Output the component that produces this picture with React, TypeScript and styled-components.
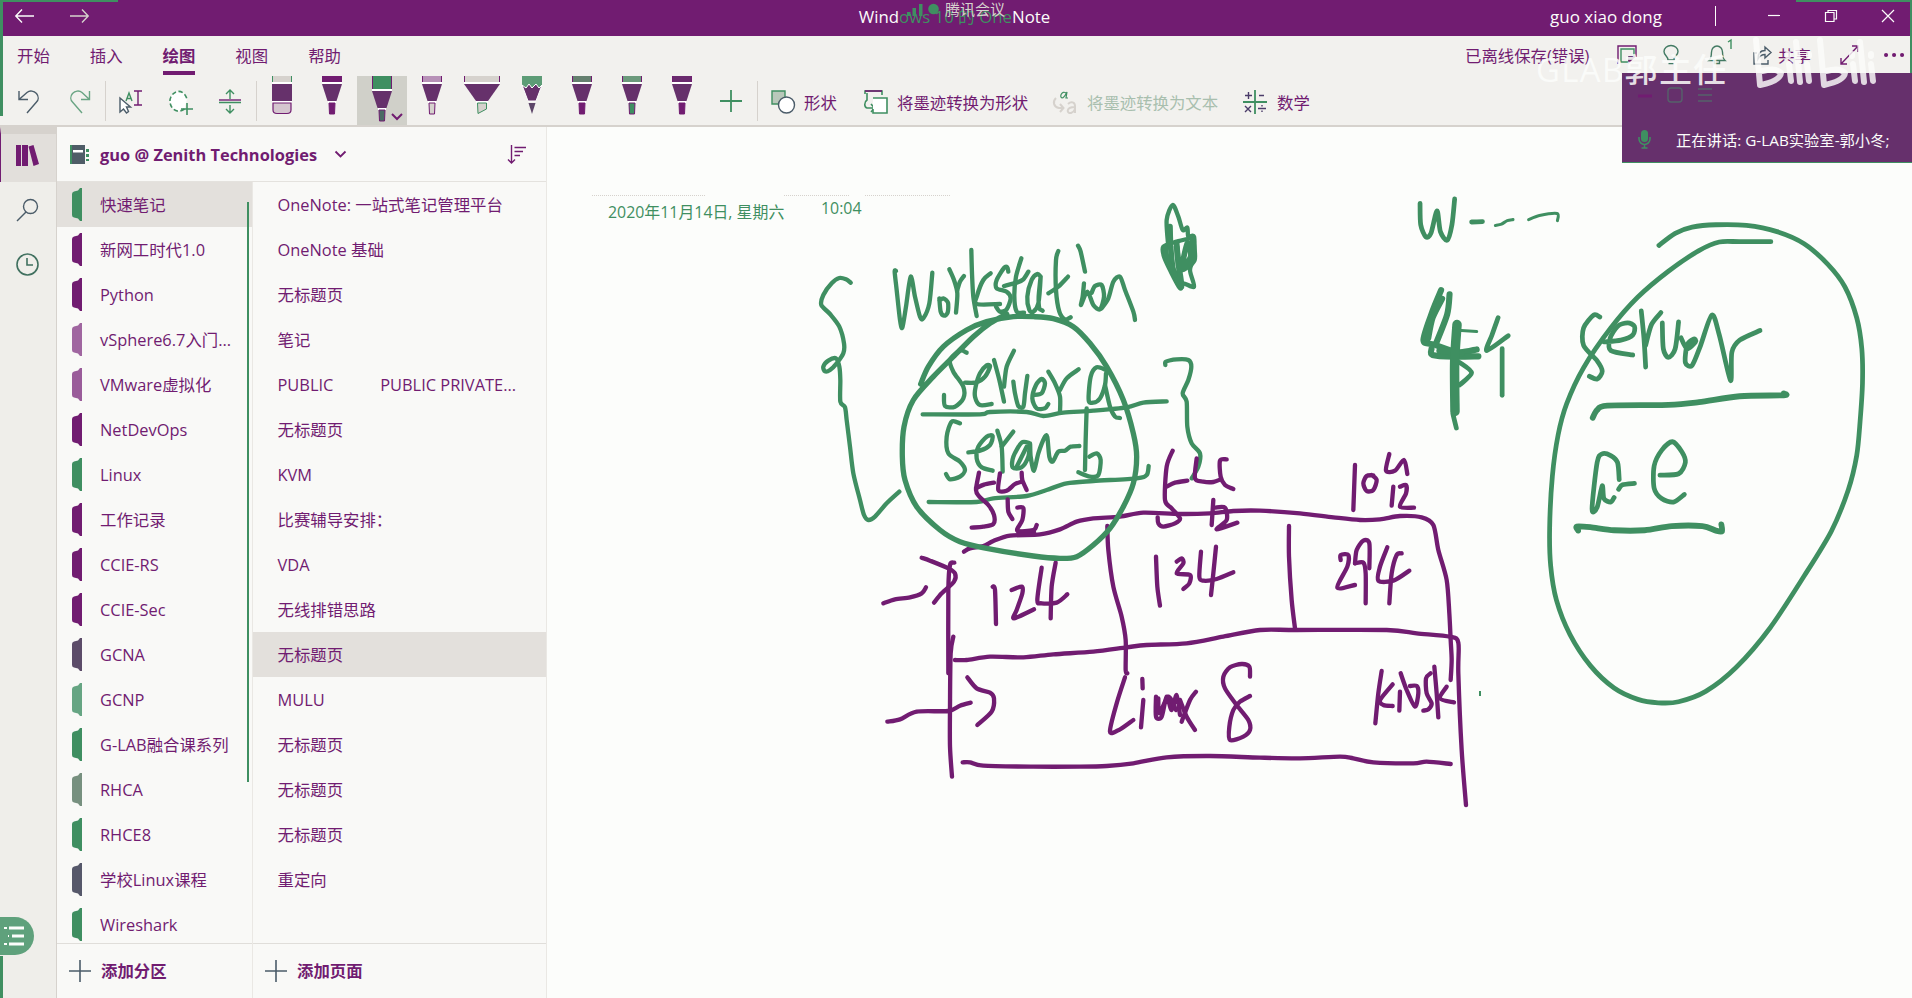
import React from 'react';
import styled, { createGlobalStyle } from 'styled-components';

const PURPLE = '#711c71';
const GREEN = '#3f8f61';
const GRAY = '#d6d2cd';
const PAPER = '#fcfdfb';
const RIBBON = '#f2f1ee';
const PANEL = '#f9f9f7';
const SELECTED = '#e3e0dc';

const GlobalStyle = createGlobalStyle`
  *, *::before, *::after { box-sizing: border-box; }
  body {
    margin: 0;
    overflow: hidden;
    background: ${PAPER};
    font-family: "Open Sans", "Noto Sans CJK SC", sans-serif;
    font-size: 16.4px;
    line-height: 24px;
    color: ${PURPLE};
  }
  svg { display: block; flex: none; overflow: visible; }
`;

const Shell = styled.div`
  position: relative;
  width: 1912px;
  height: 998px;
  display: flex;
  flex-direction: column;
  overflow: hidden;
`;

const TitleBar = styled.header`
  height: 36px;
  flex: none;
  background: ${PURPLE};
  color: ${PAPER};
  display: grid;
  grid-template-columns: 1fr auto 1fr;
  align-items: center;
  padding: 0 18px 2px 15px;
`;

const NavArrows = styled.div`
  display: flex;
  gap: 36px;
  padding-bottom: 2px;
`;

const Title = styled.div`
  white-space: nowrap;
  font-size: 16.8px;
`;

const TitleFaded = styled.span`
  color: ${GREEN};
`;

const WindowTools = styled.div`
  display: flex;
  align-items: center;
  justify-content: flex-end;
`;

const Account = styled.span`
  font-size: 17px;
  width: 113px;
  white-space: nowrap;
  margin-right: 52px;
`;

const TitleDivider = styled.span`
  width: 1px;
  height: 20px;
  background: ${PAPER};
  margin: 0 52px 3px 0;
`;

const WindowButtons = styled.div`
  display: flex;
  gap: 45px;
  padding-bottom: 2px;
`;

const Ribbon = styled.div`
  height: 91px;
  flex: none;
  background: ${RIBBON};
  border-bottom: 2px solid ${GRAY};
  display: flex;
  flex-direction: column;
`;

const TabRow = styled.div`
  height: 40px;
  flex: none;
  display: flex;
  justify-content: space-between;
  padding: 8px 8px 0 17px;
`;

const Tabs = styled.nav`
  display: flex;
  gap: 40px;
`;

const Tab = styled.span<{ $active?: boolean }>`
  height: 31px;
  white-space: nowrap;
  font-weight: ${(p) => (p.$active ? 700 : 400)};
  border-bottom: 4px solid ${(p) => (p.$active ? PURPLE : 'transparent')};
`;

const Status = styled.div`
  display: flex;
  align-items: flex-start;
  height: 24px;
`;

const StatusText = styled.span<{ $gap: number; $w?: number }>`
  white-space: nowrap;
  width: ${(p) => (p.$w ? p.$w + 'px' : 'auto')};
  margin-right: ${(p) => p.$gap}px;
`;

const Slot = styled.span<{ $w: number; $gap?: number }>`
  display: flex;
  justify-content: center;
  width: ${(p) => p.$w}px;
  padding-top: 1px;
  margin-right: ${(p) => p.$gap || 0}px;
`;

const ToolRow = styled.div`
  flex: 1;
  display: flex;
  align-items: stretch;
  padding-left: 17px;
`;

const Tool = styled.div<{ $w: number; $gap?: number; $lead?: number; $faded?: boolean }>`
  width: ${(p) => p.$w}px;
  margin: 0 ${(p) => p.$gap || 0}px 0 ${(p) => p.$lead || 0}px;
  padding-top: 14px;
  display: flex;
  gap: 9px;
  line-height: 26px;
  white-space: nowrap;
  color: ${(p) => (p.$faded ? '#a9bfae' : PURPLE)};
`;

const ToolSeparator = styled.span<{ $gap: number }>`
  width: 1px;
  height: 40px;
  margin: 5px ${(p) => p.$gap}px 0 0;
  background: ${GRAY};
`;

const PenSlot = styled.div<{ $active?: boolean }>`
  width: 50px;
  display: flex;
  justify-content: center;
  background: ${(p) => (p.$active ? '#d0d0c9' : 'transparent')};
`;

const Workspace = styled.div`
  flex: 1;
  display: flex;
  min-height: 0;
`;

const Rail = styled.aside`
  width: 57px;
  flex: none;
  background: #efeeea;
  border-right: 1px solid ${GRAY};
  display: flex;
  flex-direction: column;
`;

const RailItem = styled.div<{ $active?: boolean }>`
  height: 55px;
  display: flex;
  align-items: center;
  padding: 0 0 ${(p) => (p.$active ? 6 : 0)}px 15px;
  background: ${(p) => (p.$active ? '#e2dfdb' : 'transparent')};
  border-left: 1px solid ${(p) => (p.$active ? PURPLE : 'transparent')};
  border-top: ${(p) => (p.$active ? `7px solid ${GRAY}` : '0')};
`;

const Navigation = styled.aside`
  width: 490px;
  flex: none;
  background: ${PANEL};
  border-right: 1px solid #eae8e4;
  display: flex;
  flex-direction: column;
`;

const NotebookHeader = styled.div`
  height: 55px;
  flex: none;
  display: flex;
  align-items: center;
  padding: 0 20px 0 13px;
  border-bottom: 1px solid #e4e2de;
`;

const NotebookName = styled.span`
  width: 224px;
  margin: 1px 11px 0 11px;
  font-size: 16.4px;
  font-weight: 700;
  white-space: nowrap;
`;

const Grow = styled.span`
  flex: 1;
`;

const Columns = styled.div`
  flex: 1;
  display: flex;
  min-height: 0;
`;

const Column = styled.div<{ $w: number }>`
  position: relative;
  width: ${(p) => p.$w}px;
  flex: none;
  display: flex;
  flex-direction: column;
  border-right: 1px solid #eae8e4;
`;

const List = styled.div`
  height: 761px;
  overflow: hidden;
`;

const Row = styled.div<{ $active?: boolean; $pad: number }>`
  height: 45px;
  display: flex;
  align-items: center;
  gap: 18px;
  padding-left: ${(p) => p.$pad}px;
  background: ${(p) => (p.$active ? SELECTED : 'transparent')};
  white-space: pre;
`;

const AddRow = styled.div<{ $pad: number }>`
  flex: 1;
  display: flex;
  align-items: center;
  gap: 10px;
  padding-left: ${(p) => p.$pad}px;
  border-top: 1px solid #e0deda;
  font-weight: 700;
`;

const ScrollThumb = styled.span`
  position: absolute;
  top: 20px;
  right: 3px;
  width: 2px;
  height: 580px;
  background: ${GREEN};
`;

const Canvas = styled.main`
  position: relative;
  flex: 1;
  background: ${PAPER};
`;

const Stamp = styled.div<{ $x: number; $y: number }>`
  position: absolute;
  left: ${(p) => p.$x}px;
  top: ${(p) => p.$y}px;
  color: ${GREEN};
  font-size: 15.9px;
  line-height: 22px;
  white-space: nowrap;
`;

const InkSurface = styled.svg`
  position: absolute;
  left: 0;
  top: 0;
`;

const Frame = styled.span<{ $x: number; $y: number; $w: number; $h: number }>`
  position: absolute;
  left: ${(p) => p.$x}px;
  top: ${(p) => p.$y}px;
  width: ${(p) => p.$w}px;
  height: ${(p) => p.$h}px;
  background: ${GREEN};
`;

const MeetingTag = styled.div`
  position: absolute;
  left: 907px;
  top: 0;
  display: flex;
  align-items: center;
  gap: 5px;
  font-size: 15px;
  line-height: 18px;
  color: ${GRAY};
`;

const MeetingPanel = styled.div`
  position: absolute;
  left: 1622px;
  top: 73px;
  width: 290px;
  height: 90px;
  background: #66306c;
  border-bottom: 1px solid ${GREEN};
  color: ${PAPER};
`;

const MeetingTools = styled.div`
  display: flex;
  height: 45px;
  align-items: center;
  padding: 0 0 2px 15px;
`;

const Speaking = styled.div`
  display: flex;
  align-items: center;
  height: 43px;
  gap: 25px;
  padding-left: 16px;
  font-size: 15.3px;
  white-space: nowrap;
`;

const Watermark = styled.div`
  position: absolute;
  left: 1536px;
  top: 48px;
  font-size: 33px;
  font-weight: 500;
  line-height: 44px;
  letter-spacing: 1.3px;
  white-space: nowrap;
  color: ${PAPER};
  opacity: 0.85;
`;

const WatermarkLogo = styled.svg`
  position: absolute;
  left: 1750px;
  top: 30px;
  opacity: 0.82;
`;

const NotesBubble = styled.div`
  position: absolute;
  left: 0;
  top: 917px;
  width: 34px;
  height: 38px;
  border-radius: 0 19px 19px 0;
  background: #5fa17c;
  display: flex;
  align-items: center;
  padding-left: 4px;
`;

type IconProps = { w: number; h: number; color?: string; sw?: number; children: React.ReactNode };
const Icon = ({ w, h, color = PURPLE, sw = 1.4, children }: IconProps) => (
  <svg width={w} height={h} viewBox={`0 0 ${w} ${h}`} fill="none" stroke={color} strokeWidth={sw}>
    {children}
  </svg>
);

type PenKind = 'eraser' | 'pen' | 'marker' | 'pencil';
const Pen = ({ kind = 'pen', top = PURPLE, tip = PURPLE, active }: { kind?: PenKind; top?: string; tip?: string; active?: boolean }) => {
  const body = '#66316b';
  if (kind === 'eraser')
    return (
      <svg width="50" height="49">
        <path d="M15 0H35V6H15Z" fill={GRAY} />
        <path d="M15.500 0V6M34.500 0V6" stroke={GREEN} />
        <path d="M15 6H35V8H15Z" fill="#fff" />
        <path d="M15 8H35V25H15Z" fill={body} />
        <path d="M15 25H35V27H15Z" fill="#fff" />
        <path d="M16 27H34V34Q34 37.500 30 37.500H20Q16 37.500 16 34Z" fill="#d5c6cf" stroke={PURPLE} strokeWidth="1.200" />
      </svg>
    );
  if (kind === 'marker')
    return (
      <svg width="50" height="49">
        <path d="M7 0H43V6H7Z" fill={GRAY} />
        <path d="M7.500 0V6M42.500 0V6" stroke={PURPLE} />
        <path d="M7 6H43V8H7Z" fill="#fff" />
        <path d="M7 8H43L31 25H19Z" fill={body} />
        <path d="M19 25H31V27H19Z" fill="#fff" />
        <path d="M20.500 27H29.500V33L21 37.500Z" fill={GRAY} stroke={GREEN} />
      </svg>
    );
  if (kind === 'pencil')
    return (
      <svg width="50" height="49">
        <path d="M15 0H35V11H15Z" fill="#5d9c76" />
        <path d="M15 9L19 12L22 8L25 12L29 8L32 12L35 9L29 25H21Z" fill={body} stroke="#fff" strokeWidth="1" />
        <path d="M21.500 27H28.500L25 38Z" fill={tip} />
      </svg>
    );
  const dy = active ? 7 : 0;
  return (
    <svg width="50" height="49">
      <path d={`M15 0H35V${6 + dy}H15Z`} fill={top} />
      <path d={`M15.500 0V${6 + dy}M34.500 0V${6 + dy}`} stroke={PURPLE} />
      <path d={`M15 ${6 + dy}H35V${8 + dy}H15Z`} fill="#fff" />
      <path d={`M15 ${8 + dy}H35L29.500 ${25 + dy}H20.500Z`} fill={body} />
      <path d={`M21 ${25 + dy}H29V${27 + dy}H21Z`} fill="#fff" />
      <path d={`M22 ${27 + dy}H28L27.500 ${38 + dy}H22.500Z`} fill={tip} stroke={PURPLE} strokeWidth="1" />
      {active && <path d="M35 38L40 43L45 38" fill="none" stroke={PURPLE} strokeWidth="2" />}
    </svg>
  );
};

const Plus = () => (
  <Icon w={22} h={22} sw={1.6} color="#4b5c69">
    <path d="M11 0V22M0 11H22" />
  </Icon>
);

const SectionTab = ({ color }: { color: string }) => (
  <svg width="10" height="33">
    <path d="M0 6Q0 4 2 3.500L6 2.500L8 0H10V33H8L6 30.500L2 29.500Q0 29 0 27Z" fill={color} />
  </svg>
);

const sections: [string, string][] = [
  ['快速笔记', GREEN],
  ['新网工时代1.0', PURPLE],
  ['Python', PURPLE],
  ['vSphere6.7入门...', '#a066a0'],
  ['VMware虚拟化', '#9a5c9a'],
  ['NetDevOps', PURPLE],
  ['Linux', GREEN],
  ['工作记录', PURPLE],
  ['CCIE-RS', PURPLE],
  ['CCIE-Sec', PURPLE],
  ['GCNA', '#5c4c69'],
  ['GCNP', '#66a583'],
  ['G-LAB融合课系列', GREEN],
  ['RHCA', '#77907f'],
  ['RHCE8', GREEN],
  ['学校Linux课程', '#56586a'],
  ['Wireshark', GREEN],
];

const pages = [
  'OneNote: 一站式笔记管理平台',
  'OneNote 基础',
  '无标题页',
  '笔记',
  'PUBLIC           PUBLIC PRIVATE...',
  '无标题页',
  'KVM',
  '比赛辅导安排：',
  'VDA',
  '无线排错思路',
  '无标题页',
  'MULU',
  '无标题页',
  '无标题页',
  '无标题页',
  '重定向',
];

/* Turns a list of pen samples into a smooth curve through every sample. */
const smooth = (samples: string) => {
  const p = samples.trim().split(/\s+/).map((s) => s.split(',').map(Number));
  let d = `M${p[0][0]} ${p[0][1]}`;
  for (let i = 0; i < p.length - 1; i++) {
    const a = p[Math.max(0, i - 1)];
    const b = p[i];
    const c = p[i + 1];
    const e = p[Math.min(p.length - 1, i + 2)];
    const k = 7;
    d += `C${b[0] + (c[0] - a[0]) / k} ${b[1] + (c[1] - a[1]) / k} ${c[0] - (e[0] - b[0]) / k} ${c[1] - (e[1] - b[1]) / k} ${c[0]} ${c[1]}`;
  }
  return d;
};

type InkProps = { at: string; color: string; width: number; strokes: string[] };
const Ink = ({ at, color, width, strokes }: InkProps) => (
  <g transform={at} fill="none" stroke={color} strokeWidth={width} strokeLinecap="round" strokeLinejoin="round">
    {strokes.map((s, i) => (
      <path key={i} d={smooth(s)} />
    ))}
  </g>
);

const AT_WORK = 'translate(800 180) scale(.33333)';
const AT_LEFT = 'translate(860 440) scale(.33333)';
const AT_RIGHT = 'translate(1100 440) scale(.33333)';
const AT_SERVER = 'translate(1380 180) scale(.3393 .3444)';

const tableLeft = [
  '357,98 348,150 358,170 385,195 402,225 400,252 370,260 335,263',
  '348,145 372,134 402,128',
  '420,100 415,150 440,152 465,132 485,125',
  '485,98 487,120 500,150',
  '443,178 445,215 457,237',
  '472,203 490,204 487,240 472,272 520,270 530,255',
  '475,276 522,276',
  '70,490 105,478 150,472 185,460 198,442',
  '185,353 210,362 265,385 285,400 282,425 245,460 222,488',
  '283,368 270,375 265,450 265,700',
  '280,590 272,640 270,800 270,920 276,1010',
  '398,440 405,450 408,552',
  '455,450 485,440 487,460 470,510 462,535 522,508',
  '545,383 532,480 545,490 590,488 622,463',
  '587,368 575,440 572,535',
  '742,258 745,330 760,440 785,530 797,600 797,690 802,700',
  '82,845 120,838 170,815 265,813 300,797 332,788',
  '322,712 350,745 390,758 402,775 395,815 352,855',
];

const tableRight = [
  '-408,335 -390,325 -350,318 -320,303 -270,287 -180,283 -120,268 -70,245 -20,235 60,230 130,218 240,222 330,220 400,213 480,212 600,220 700,232 780,240 840,238 900,228 965,232 1000,255 1015,330 1040,420 1048,520 1052,600 1055,660 1052,720',
  '-435,660 -400,660 -330,650 -230,652 -140,643 -20,635 80,622 140,615 260,610 370,590 480,570 590,570 860,570 950,580 1050,590 1075,608 1075,700 1085,930 1098,1095',
  '-412,967 -390,967 -350,977 -200,980 -60,980 20,978 100,970 200,952 330,948 480,953 600,955 720,950 760,955 820,967 940,970 980,965 1052,972',
  '218,32 200,80 195,180 215,205 240,235 225,250 190,260 175,250 173,232',
  '200,140 225,128 262,122',
  '290,55 285,115 310,125 340,126 362,118',
  '380,58 360,62 362,110 375,135 400,147',
  '340,180 335,255',
  '345,203 375,203 380,240 350,268 412,248',
  '168,350 172,440 180,497',
  '230,365 245,355 250,370 230,400 270,405 268,430 250,447',
  '303,335 298,410 310,422 350,417 400,397',
  '348,320 340,400 333,465',
  '567,258 567,350 575,480 585,565',
  '765,75 760,210',
  '820,106 800,108 790,130 800,153 820,150 830,120 815,105',
  '868,42 858,92 885,92 912,60 922,102',
  '880,140 875,197',
  '900,140 918,135 918,160 900,200 942,203',
  '722,360 722,345 745,345 742,380 712,443 765,435',
  '765,370 770,330 790,302 808,310 808,385',
  '765,370 790,368 797,400 797,490',
  '862,322 840,380 835,422 880,422 928,392',
  '905,340 890,345 875,400 868,490',
  '75,712 50,790 30,875 60,868 100,840',
  '127,717 128,745',
  '130,780 123,862',
  '168,770 168,830 185,830 200,770 215,810 230,765 240,825',
  '175,775 178,820 205,770 228,810',
  '245,845 270,780 288,755',
  '240,780 260,830 285,870',
  '450,710 448,680 425,672 390,682 370,710 375,745 410,795 445,840 450,870 430,890 390,900 388,860 400,810 420,785 450,768',
  '845,693 835,760 826,850',
  '878,733 840,780 850,795 878,798',
  '900,755 898,812',
  '902,700 920,750 945,800 955,760 950,738 930,738',
  '992,700 978,715 980,760 995,790 985,808 970,812',
  '1003,680 1010,760 1015,832',
  '1040,740 1020,775 1062,787',
];

const workNotes = [
  '152,308 138,298 118,294 95,310 70,345 64,375 90,402 118,440 132,490 130,520 110,550 90,570 75,574 70,560 85,542 108,535 118,560 121,600 121,665 135,682 140,720 150,800 160,880 180,960 192,1005 205,1020 225,1010 260,970 298,935',
  '288,273 284,275 290,330 300,420 307,443 318,380 332,290 345,350 360,410 370,415 388,370 397,278',
  '418,355 422,395 432,407 443,398 444,368 430,355 418,362',
  '448,268 462,300 472,340 468,398',
  '472,330 480,305 492,288',
  '514,210 516,280 520,350 530,408',
  '572,280 550,300 532,345 530,372 600,372',
  '625,275 622,262 612,264 590,300 590,325 620,335 632,355 620,388 600,395 588,380',
  '664,235 648,290 643,350 650,395 672,398',
  '612,318 650,308 670,298 685,275',
  '722,290 712,282 695,300 682,350 688,390 700,395 715,370 722,290 716,350 718,385 728,392',
  '775,213 768,240 768,330 778,395 795,418 812,412',
  '745,340 775,320 804,290',
  '834,197 842,215 855,275',
  '852,310 848,350 843,375 862,335 880,375 900,388 912,350 905,315 885,318 875,338',
  '905,385 925,355 940,305 960,290 975,330 1000,395 1005,420',
  '500,518 480,512 450,540 460,575 490,620 490,655 465,680 435,678 432,645',
  '495,608 530,607 555,590 570,560 560,556 540,580 527,620 525,650 540,675 575,672',
  '582,540 598,600 612,665',
  '612,620 620,560 642,512',
  '640,605 645,640 655,678 670,680 675,640 682,588',
  '700,645 725,640 735,610 725,597 708,615 697,655 710,685 735,685 745,672',
  '745,575 765,610 780,650 780,695',
  '780,630 800,595 836,568',
  '918,570 890,562 872,590 866,660 880,668 900,655 915,615 918,580',
  '915,615 930,680 945,710 960,714',
  '368,703 540,703 570,696 680,696 730,708 790,698 880,692 980,682 1030,668 1100,664',
  '1096,555 1098,545 1130,538 1165,540 1174,560 1165,600 1148,640 1160,665 1162,740 1175,790 1200,820 1195,860 1175,895',
  '480,730 455,725 440,770 445,820 480,845 495,870 480,890 450,898 438,882',
  '505,817 540,812 570,795 578,768 560,770 535,800 530,835 545,862 578,872',
  '592,752 605,800 608,875',
  '605,800 640,755',
  '690,790 665,788 640,830 638,862 665,862 685,830 690,790 692,830 702,872 715,820 735,770 742,772 748,830 758,845 775,815 795,812 812,800 838,798',
  '650,860 680,800',
  '860,685 857,780 855,870',
  '835,877 870,890 895,885 902,840 890,820 868,830',
  '386,966 530,966 580,955 680,948 740,930 800,910 880,903 1010,895 1040,885 1046,858',
  '1105,200 1100,120 1118,75 1135,110 1148,150 1162,143 1165,170 1182,170 1182,230 1170,270 1182,320 1150,310 1140,325 1110,270 1092,230 1090,200 1130,185 1170,175',
];

const workScribble = [
  '1110,140 1112,200 1120,270 1145,320 1135,250 1130,200',
  '1130,190 1140,270 1162,190 1172,230 1145,270 1182,240 1178,180',
  '1096,205 1102,240 1125,285',
];

const workCircle = [
  '362,612 385,560 430,500 500,450 560,425 640,410 700,410 760,416 820,440 870,490 920,560 970,660 1000,760 1010,830 1000,910 970,980 930,1045 880,1095 830,1130 780,1135 700,1128 560,1105 480,1085 420,1050 350,980 315,900 307,830 312,740 340,660 400,590 460,530 520,470 570,430 620,402',
];

const serverNotes = [
  '118,68 120,130 135,165 150,155 168,90 178,150 198,175 212,130 220,55',
  '270,122 302,121',
  '235,530 270,560 235,595',
  '348,400 330,450 315,495 378,452',
  '360,490 360,625',
  '215,680 225,720',
  '822,190 870,155 920,137 990,130 1080,132 1170,150 1250,185 1320,245 1370,310 1405,400 1420,490 1422,590 1415,700 1405,800 1380,900 1330,1020 1250,1150 1150,1300 1050,1415 960,1485 880,1515 820,1518 760,1508 690,1475 620,1410 560,1320 520,1220 503,1120 500,1010 508,860 525,740 550,650 600,545 680,430 760,340 850,265 940,205 1000,180 1060,179 1152,179',
  '648,398 630,392 600,430 600,480 640,525 655,555 640,578 617,570',
  '660,470 710,465 745,450 750,425 730,415 700,425 678,460 680,495 745,508',
  '770,380 778,460 783,543',
  '783,480 800,420 828,385',
  '832,415 835,490 850,515 870,490 880,412',
  '887,458 905,490 930,470 925,462 905,480 900,530 920,538 945,480 978,392 1000,450 1033,582 1037,500 1060,465 1120,437',
  '705,870 700,820 680,800 655,795 640,820 625,955 640,950 655,888 660,925 680,935 690,922',
  '703,898 715,885 750,881',
  '825,857 880,853 900,820 890,790 862,760 830,785 808,830 808,895 830,925 865,935 897,913',
];

const crossedFour = [
  '180,320 155,380 128,465 160,478 230,500 285,492',
  '183,345 155,400 142,460',
  '205,332 198,390 165,475',
  '152,490 155,508 220,513 290,512',
  '175,495 240,505',
];

const serverRules = [
  '627,690 640,668 670,655 850,653 940,645 1060,628 1190,625 1190,620',
  '584,1018 580,1006 620,1008 690,1017 780,1017 860,1005 950,1005 990,1018 1008,1020 1006,1000',
];

export default function App() {
  return (
    <Shell>
      <GlobalStyle />
      <TitleBar>
        <NavArrows>
          <Icon w={19} h={14} color={PAPER}><path d="M19 7H1M7 .5L.8 7L7 13.500" /></Icon>
          <Icon w={19} h={14} color={GRAY}><path d="M0 7H18M12 .5L18.200 7L12 13.500" /></Icon>
        </NavArrows>
        <Title>Wind<TitleFaded>ows 10 的 One</TitleFaded>Note</Title>
        <WindowTools>
          <Account>guo xiao dong</Account>
          <TitleDivider />
          <WindowButtons>
            <Icon w={12} h={12} color={PAPER} sw={1.2}><path d="M0 5.500H12" /></Icon>
            <Icon w={12} h={12} color={PAPER} sw={1.2}><path d="M.5 2.500H9V11.500H.5ZM3 2.500V.5H11.500V9H9" /></Icon>
            <Icon w={12} h={12} color={PAPER} sw={1.2}><path d="M0 0L12 12M12 0L0 12" /></Icon>
          </WindowButtons>
        </WindowTools>
      </TitleBar>

      <Ribbon>
        <TabRow>
          <Tabs>
            <Tab>开始</Tab>
            <Tab>插入</Tab>
            <Tab $active>绘图</Tab>
            <Tab>视图</Tab>
            <Tab>帮助</Tab>
          </Tabs>
          <Status>
            <StatusText $gap={30} $w={122}>已离线保存(错误)</StatusText>
            <Slot $w={20} $gap={26}>
              <Icon w={20} h={20}><path d="M4 4H17V12H12V17H4Z" stroke={GREEN} /><path d="M17 12L12 17V12Z" fill={GREEN} /><path d="M1 19V1H19V12" /></Icon>
            </Slot>
            <Slot $w={16} $gap={29}>
              <Icon w={16} h={20} color="#437a63"><path d="M5 15C5 11 1 10.500 1 6.500A7 6 0 0 1 15 6.500C15 10.500 11 11 11 15ZM5.500 18.500H10.500" /></Icon>
            </Slot>
            <Slot $w={18} $gap={1}>
              <Icon w={18} h={20} color="#437a63"><path d="M1 15.500H17C14 13 15 11 14.500 7A5.500 6 0 0 0 3.500 7C3 11 4 13 1 15.500ZM6.500 16V18.500H11.500V16" /></Icon>
            </Slot>
            <Slot $w={6} $gap={20}>
              <Icon w={4} h={10} color={GREEN}><path d="M0 -3L3 -5V4" /></Icon>
            </Slot>
            <Slot $w={19} $gap={6}>
              <Icon w={19} h={20} color="#4b5c69"><path d="M4 8H1V19H15V15M5 14C5 8 8 5.500 12 5.500V2L18 7.500L12 13V9.500C9 9.500 7 10.500 5 14Z" /></Icon>
            </Slot>
            <StatusText $gap={29} $w={33}>共享</StatusText>
            <Slot $w={19} $gap={25}>
              <Icon w={19} h={20}><path d="M1 19L18 1M12 1H18V7M1 13V19H7" /></Icon>
            </Slot>
            <Slot $w={20}>
              <Icon w={20} h={20}><path d="M2 10h.1M10 10h.1M18 10h.1" strokeWidth="4" strokeLinecap="round" /></Icon>
            </Slot>
          </Status>
        </TabRow>
        <ToolRow>
          <Tool $w={23} $gap={30}><Icon w={23} h={24} color="#4b5c69"><path d="M2 1V9.500H11M2 9.500L10 2.500C13 0 17 1 19.500 3.500C22 6.500 21.500 10 19.500 12L10 23" /></Icon></Tool>
          <Tool $w={22} $gap={13}><Icon w={22} h={24} color="#69a483"><path d="M19.500 1V9.500H11M19.500 9.500L12 2.500C9 0 5 1 2.500 3.500C0 6.500 .5 10 2.500 12L12 23" /></Icon></Tool>
          <ToolSeparator $gap={13} />
          <Tool $w={24} $gap={26}>
            <Icon w={24} h={24} color="#4b5c69"><path d="M1 8V22L4.500 19L7.500 23L9.500 21.500L7.500 17L11.500 17Z" fill="#fff" /><path d="M7 11L10 3L13 11M8 8.500H12" stroke={GREEN} /><path d="M15 1H23M19 1V15M15 15H23" stroke={PURPLE} /></Icon>
          </Tool>
          <Tool $w={24} $gap={26}>
            <Icon w={24} h={25} color={GREEN} sw={1.6}><path d="M15.500 19C5 26 -1 14 1.500 8C5-1 15-1 18 9" strokeDasharray="4.500 2.500" fill="#fff" /><path d="M18 13V25M12 19H24" stroke={GREEN} /></Icon>
          </Tool>
          <Tool $w={22} $gap={15}>
            <Icon w={22} h={24} color={GREEN}><path d="M0 12.500H22M11 9V1M7 4L11 0L15 4M11 15V22M7 19L11 23L15 19" /><path d="M0 10H22" stroke={PURPLE} /></Icon>
          </Tool>
          <ToolSeparator $gap={0} />
          <PenSlot><Pen kind="eraser" /></PenSlot>
          <PenSlot><Pen /></PenSlot>
          <PenSlot $active><Pen active top={GREEN} tip="#4a6b64" /></PenSlot>
          <PenSlot><Pen top="#b791b7" tip={GRAY} /></PenSlot>
          <PenSlot><Pen kind="marker" /></PenSlot>
          <PenSlot><Pen kind="pencil" tip="#5d4669" /></PenSlot>
          <PenSlot><Pen top="#65806f" tip={PURPLE} /></PenSlot>
          <PenSlot><Pen top="#6c9a7c" tip={GREEN} /></PenSlot>
          <PenSlot><Pen top="#6a2b6e" /></PenSlot>
          <Tool $w={22} $gap={15} $lead={13}><Icon w={22} h={24} color={GREEN} sw={1.8}><path d="M11 0V22M0 11H22" /></Icon></Tool>
          <ToolSeparator $gap={13} />
          <Tool $w={93}>
            <Icon w={24} h={24} color={GREEN}><path d="M1 1H14V14H1Z" fill="#b9c8ba" /><circle cx="15.500" cy="15" r="8" fill="#fff" stroke="#4b5c69" /></Icon>
            形状
          </Tool>
          <Tool $w={189}>
            <Icon w={24} h={24} color={GREEN} sw={1.6}><path d="M1 4V1H18V5M3 3V10C0 12 0 17 3 18H10M7 14L10.500 18L7 22" /><path d="M9 8H23V23H9V19" fill="#fff" /><path d="M1 1H18" stroke={PURPLE} /></Icon>
            将墨迹转换为形状
          </Tool>
          <Tool $w={190} $faded>
            <Icon w={25} h={24} color={GRAY} sw={1.6}><path d="M13 3C9 0 6 7 9 8C11 8 13 4 14 2L13 8H15" stroke={GREEN} strokeWidth="1.200" /><path d="M3 8C-1 12 1 17 6 18H10M7 14L10.500 18L7 22M15 14C18 11 22 12 22 16V23M22 17C12 17 14 24 18 23Q21 22 22 19" strokeWidth="2" /></Icon>
            将墨迹转换为文本
          </Tool>
          <Tool $w={80}>
            <Icon w={25} h={24} color={GREEN}><path d="M0 12H24M12 0V24" strokeWidth="1.800" /><path d="M2 5.500H9M5.500 2V9M16 5.500H21M2 16L8 22M8 16L2 22M15 18.500H23M19 15V16.500M19 20.500V22" stroke="#4b3c69" /></Icon>
            数学
          </Tool>
        </ToolRow>
      </Ribbon>

      <Workspace>
        <Rail>
          <RailItem $active>
            <Icon w={23} h={21} sw={0}><path d="M0 0H5V21H0ZM6 0H12V21H6ZM12.500 1.500L17.500 0L23 19L17.500 21Z" fill={PURPLE} /></Icon>
          </RailItem>
          <RailItem>
            <Icon w={23} h={24} color="#4b5c69"><circle cx="14.500" cy="8.500" r="7" /><path d="M10 14L1 23" /></Icon>
          </RailItem>
          <RailItem>
            <Icon w={23} h={23} color="#40705f" sw={1.6}><circle cx="11.500" cy="11.500" r="10.500" /><path d="M11 5V12H17" /></Icon>
          </RailItem>
        </Rail>

        <Navigation>
          <NotebookHeader>
            <Icon w={19} h={19} sw={0}><path d="M0 0H15V19H0Z" fill="#4f5d67" /><path d="M0 0H2V19H0Z" fill={GREEN} /><path d="M3 5H13V7.500H3Z" fill="#fff" /><path d="M16 4H19V7H16ZM16 9H19V12H16ZM16 14H19V16H16Z" fill={GREEN} /></Icon>
            <NotebookName>guo @ Zenith Technologies</NotebookName>
            <Icon w={11} h={7} sw={1.8}><path d="M.5 .5L5.500 5.500L10.500 .5" /></Icon>
            <Grow />
            <Icon w={18} h={19}><path d="M3.500 0V18M0 14.500L3.500 18L7 14.500M6.500 2.500H18M6.500 6.500H15M6.500 10.500H12" /></Icon>
          </NotebookHeader>
          <Columns>
            <Column $w={196}>
              <List>
                {sections.map(([name, color], i) => (
                  <Row key={name} $pad={15} $active={i === 0}>
                    <SectionTab color={color} />
                    {name}
                  </Row>
                ))}
              </List>
              <AddRow $pad={12}><Plus />添加分区</AddRow>
              <ScrollThumb />
            </Column>
            <Column $w={294}>
              <List>
                {pages.map((name, i) => (
                  <Row key={i} $pad={24.5} $active={i === 10}>{name}</Row>
                ))}
              </List>
              <AddRow $pad={12}><Plus />添加页面</AddRow>
            </Column>
          </Columns>
        </Navigation>

        <Canvas>
          <Stamp $x={61} $y={74}>2020年11月14日, 星期六</Stamp>
          <Stamp $x={274} $y={70}>10:04</Stamp>
          <InkSurface width="1365" height="871" viewBox="547 127 1365 871">
            <path d="M592 195.500H705M784 195.500H849M865 195.500H951" stroke={GRAY} strokeDasharray="1 1" />
            <Ink at={AT_WORK} color={GREEN} width={13} strokes={workNotes} />
            <Ink at={AT_WORK} color={GREEN} width={17} strokes={workScribble} />
            <Ink at={AT_LEFT} color={PURPLE} width={13} strokes={tableLeft} />
            <Ink at={AT_RIGHT} color={PURPLE} width={13} strokes={tableRight} />
            <Ink at={AT_WORK} color={GREEN} width={16} strokes={workCircle} />
            <Ink at={AT_SERVER} color={GREEN} width={14} strokes={serverNotes} />
            <Ink at={AT_SERVER} color={GREEN} width={9} strokes={['340,132 358,128 375,118 392,115', '438,115 470,103 522,97 523,118', '240,437 285,440']} />
            <Ink at={AT_SERVER} color={GREEN} width={17} strokes={serverRules} />
            <Ink at={AT_SERVER} color={GREEN} width={18} strokes={crossedFour} />
            <Ink at={AT_SERVER} color={GREEN} width={28} strokes={['227,420 220,530 221,672']} />
            <path d="M1480 691V696" stroke={GREEN} strokeWidth="2" />
          </InkSurface>
        </Canvas>
      </Workspace>

      <MeetingPanel>
        <MeetingTools>
          <Slot $w={16} $gap={14}><Icon w={16} h={16} sw={3}><path d="M1 9H15" /></Icon></Slot>
          <Slot $w={16} $gap={14}><Icon w={16} h={16} color="#55626a"><rect x="1" y="1" width="14" height="14" rx="3" /></Icon></Slot>
          <Slot $w={16}><Icon w={16} h={16} color="#55626a"><path d="M1 2H15M1 8H15M1 14H15" /></Icon></Slot>
        </MeetingTools>
        <Speaking>
          <svg width="13" height="19">
            <rect x="3" y="0" width="7" height="12" rx="3.500" fill={GREEN} />
            <path d="M1 7V9A5.500 5.500 0 0 0 12 9V7M6.500 14V18M3.500 18H9.500" fill="none" stroke={GREEN} strokeWidth="1.500" />
          </svg>
          正在讲话: G-LAB实验室-郭小冬;
        </Speaking>
      </MeetingPanel>

      <Watermark>GLAB郭主任</Watermark>
      <WatermarkLogo width="132" height="62" viewBox="0 0 132 62" fill="none" stroke={PAPER} strokeLinecap="round" strokeLinejoin="round">
        <g strokeWidth="6">
          <path d="M6 10L10 55Q30 51 31 43Q26 37 12 41M39 34L41 51M46 12L50 52M57 34L59 51M59 24V26M38 24V26" />
          <path d="M70 10L74 55Q94 51 95 43Q90 37 76 41M103 34L105 51M110 12L114 52M121 34L123 51M121 24V26M102 24V26" />
        </g>
      </WatermarkLogo>

      <MeetingTag>
        <svg width="17" height="14">
          <path d="M0 14V10H3.500V14ZM5.500 14V6H9V14ZM12 14V2H15.500V14Z" fill={GREEN} />
        </svg>
        <svg width="11" height="11"><circle cx="4.500" cy="5" r="5.300" fill={GREEN} /></svg>
        <span>腾讯会议</span>
      </MeetingTag>

      <Frame $x={0} $y={0} $w={118} $h={2} />
      <Frame $x={0} $y={0} $w={3} $h={116} />
      <Frame $x={1796} $y={0} $w={116} $h={2} />
      <Frame $x={1910} $y={0} $w={2} $h={73} />
      <Frame $x={0} $y={956} $w={3} $h={42} />
      <NotesBubble>
        <Icon w={22} h={20} color={PAPER} sw={3}><path d="M5 2H20M8 10H20M5 18H20" /><path d="M0 2H3M0 18H3M4 10H5" strokeWidth="2" /></Icon>
      </NotesBubble>
    </Shell>
  );
}
